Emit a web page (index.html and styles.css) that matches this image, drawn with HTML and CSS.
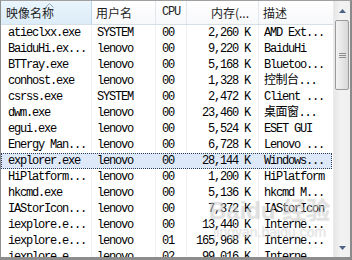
FILE: index.html
```html
<!DOCTYPE html>
<html>
<head>
<meta charset="utf-8">
<link rel="stylesheet" href="styles.css">
</head>
<body>
<div class="frame">
  <div class="list">
    <div class="head">
      <div class="hc c1 sorted">映像名称<svg class="arrow" width="9" height="5" viewBox="0 0 9 5"><path d="M0.5 4.5 L4.5 0.5 L8.5 4.5" fill="none" stroke="#97a5b8" stroke-width="1"/></svg></div>
      <div class="hc c2">用户名</div>
      <div class="hc c3 mono">CPU</div>
      <div class="hc c4 right">内存(...</div>
      <div class="hc c5">描述</div>
    </div>
    <div class="rows">
      <div class="row"><span class="c1">atieclxx.exe</span><span class="c2">SYSTEM</span><span class="c3">00</span><span class="c4">2,260 K</span><span class="c5">AMD Ext...</span></div>
      <div class="row"><span class="c1">BaiduHi.ex...</span><span class="c2">lenovo</span><span class="c3">00</span><span class="c4">9,220 K</span><span class="c5">BaiduHi</span></div>
      <div class="row"><span class="c1">BTTray.exe</span><span class="c2">lenovo</span><span class="c3">00</span><span class="c4">5,168 K</span><span class="c5">Bluetoo...</span></div>
      <div class="row"><span class="c1">conhost.exe</span><span class="c2">lenovo</span><span class="c3">00</span><span class="c4">1,328 K</span><span class="c5"><span class="cj">控制台</span>...</span></div>
      <div class="row"><span class="c1">csrss.exe</span><span class="c2">SYSTEM</span><span class="c3">00</span><span class="c4">2,472 K</span><span class="c5">Client ...</span></div>
      <div class="row"><span class="c1">dwm.exe</span><span class="c2">lenovo</span><span class="c3">00</span><span class="c4">23,460 K</span><span class="c5"><span class="cj">桌面窗</span>...</span></div>
      <div class="row"><span class="c1">egui.exe</span><span class="c2">lenovo</span><span class="c3">00</span><span class="c4">5,524 K</span><span class="c5">ESET GUI</span></div>
      <div class="row"><span class="c1">Energy Man...</span><span class="c2">lenovo</span><span class="c3">00</span><span class="c4">6,728 K</span><span class="c5">Lenovo ...</span></div>
      <div class="row sel"><span class="c1">explorer.exe</span><span class="c2">lenovo</span><span class="c3">00</span><span class="c4">28,144 K</span><span class="c5">Windows...</span></div>
      <div class="row"><span class="c1">HiPlatform...</span><span class="c2">lenovo</span><span class="c3">00</span><span class="c4">1,200 K</span><span class="c5">HiPlatform</span></div>
      <div class="row"><span class="c1">hkcmd.exe</span><span class="c2">lenovo</span><span class="c3">00</span><span class="c4">5,136 K</span><span class="c5">hkcmd M...</span></div>
      <div class="row"><span class="c1">IAStorIcon...</span><span class="c2">lenovo</span><span class="c3">00</span><span class="c4">7,372 K</span><span class="c5">IAStorIcon</span></div>
      <div class="row"><span class="c1">iexplore.e...</span><span class="c2">lenovo</span><span class="c3">00</span><span class="c4">13,440 K</span><span class="c5">Interne...</span></div>
      <div class="row"><span class="c1">iexplore.e...</span><span class="c2">lenovo</span><span class="c3">01</span><span class="c4">165,968 K</span><span class="c5">Interne...</span></div>
      <div class="row"><span class="c1">iexplore.e...</span><span class="c2">lenovo</span><span class="c3">02</span><span class="c4">99,016 K</span><span class="c5">Interne...</span></div>
    </div>
    <div class="watermark"><span class="wm-big">Bai<span class="wm-paw">du</span> 经验</span><span class="wm-small">jingyan.baidu.com</span></div>
  </div>
  <div class="scroll">
    <div class="sbtn"><svg width="7" height="4" viewBox="0 0 7 4"><path d="M0 4 L3.5 0 L7 4 Z" fill="#4d6185"/></svg></div>
    <div class="thumb"><div class="grip"></div></div>
    <div class="track"></div>
    <div class="sbtn"><svg width="7" height="4" viewBox="0 0 7 4"><path d="M0 0 L3.5 4 L7 0 Z" fill="#4d6185"/></svg></div>
  </div>
</div>
</body>
</html>
```
FILE: styles.css
```css
html, body {
  margin: 0;
  padding: 0;
  background: #fff;
}
.frame {
  width: 349px;
  height: 256px;
  border-left: 1px solid #8e8f8f;
  border-top: 1px solid #a0a0a0;
  border-right: 2px solid #8a8a8a;
  border-bottom: 3px solid #8c8c8c;
  display: flex;
  overflow: hidden;
}
.list {
  width: 332px;
  position: relative;
  overflow: hidden;
}
.head {
  height: 23px;
  border-bottom: 1px solid #d5dfe5;
  display: grid;
  grid-template-columns: 91px 64px 31px 72px 74px;
  background: linear-gradient(#ffffff, #f7f8fa);
}
.hc {
  position: relative;
  font-family: "Noto Sans CJK SC", sans-serif;
  font-size: 12px;
  line-height: 23px;
  color: #1e1e1e;
  border-right: 1px solid #e3e8ee;
  white-space: nowrap;
  overflow: hidden;
}
.hc.mono {
  font-family: "Liberation Mono", monospace;
  letter-spacing: -1.2px;
}
.hc.sorted {
  background: linear-gradient(#eaf5fc, #dcecf8);
  border-right: 1px solid #c0d8ea;
}
.hc.right {
  text-align: right;
}
.arrow {
  position: absolute;
  left: 44px;
  top: 2px;
}
.head .c1 { padding-left: 5px; }
.head .c2 { padding-left: 4px; }
.head .c3 { padding-left: 6px; }
.head .c4 { padding-right: 9px; }
.head .c5 { padding-left: 4px; border-right: none; }
.rows {
  display: flex;
  flex-direction: column;
}
.row {
  height: 16px;
  display: grid;
  grid-template-columns: 91px 64px 31px 72px 74px;
  font-family: "Liberation Mono", "Noto Sans CJK SC", monospace;
  font-size: 12px;
  line-height: 16px;
  letter-spacing: -1.2px;
  color: #000;
  box-sizing: border-box;
}
.row span {
  white-space: nowrap;
  overflow: hidden;
}
.row > span {
  border-right: 1px solid #f0f0f0;
}
.row .c1 { padding-left: 7px; }
.row .c2 { padding-left: 5px; }
.row .c3 { padding-left: 6px; }
.row .c4 { text-align: right; padding-right: 8px; }
.row .c5 { padding-left: 5px; border-right: none; }
.cj {
  letter-spacing: -0.5px;
}
.row.sel {
  background: #dde9f8;
  outline: 1px dotted #2c3e5c;
  outline-offset: -1px;
  width: 331px;
}
.row.sel > span {
  border-right-color: transparent;
}
.watermark {
  position: absolute;
  left: 208px;
  top: 196px;
  display: flex;
  flex-direction: column;
  align-items: center;
  pointer-events: none;
}
.wm-big {
  font-family: "Liberation Sans", "Noto Sans CJK SC", sans-serif;
  font-weight: bold;
  font-size: 24px;
  line-height: 28px;
  color: rgba(255, 255, 255, 0.35);
  text-shadow: 0 0 1px rgba(120, 120, 120, 0.35);
}
.wm-small {
  font-family: "Liberation Sans", sans-serif;
  font-size: 14px;
  line-height: 14px;
  color: rgba(255, 255, 255, 0.35);
  text-shadow: 0 0 1px rgba(120, 120, 120, 0.35);
}
.scroll {
  width: 17px;
  display: flex;
  flex-direction: column;
  background: linear-gradient(90deg, #e6e6e6, #f2f2f2 40%, #f0f0f0);
  border-left: 1px solid #eaeaea;
  box-sizing: border-box;
}
.sbtn {
  height: 19px;
  display: flex;
  align-items: center;
  justify-content: center;
  flex: none;
}
.thumb {
  height: 70px;
  margin: 0 1px;
  border: 1px solid #9a9a9a;
  border-radius: 2px;
  background: linear-gradient(90deg, #f3f3f3, #e6e6e6 50%, #d8d8d8);
  display: flex;
  align-items: center;
  justify-content: center;
  flex: none;
  box-sizing: border-box;
}
.grip {
  width: 7px;
  height: 5px;
  background: repeating-linear-gradient(#8f8f8f 0 1px, transparent 1px 2px);
}
.track {
  flex: 1;
}
```
